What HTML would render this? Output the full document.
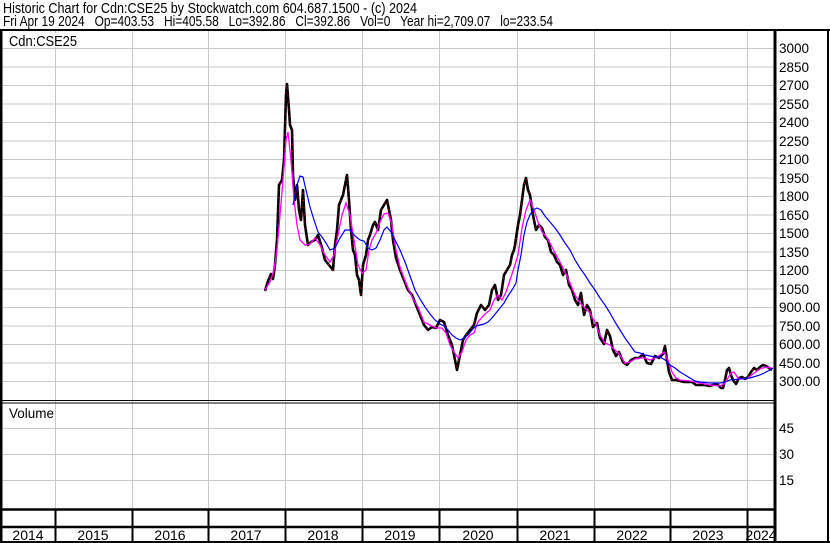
<!DOCTYPE html>
<html><head><meta charset="utf-8"><style>
html,body{margin:0;padding:0;background:#fff;width:830px;height:543px;overflow:hidden}
svg{display:block}
text{font-family:"Liberation Sans",Arial,sans-serif;fill:#000}
</style></head><body>
<svg width="830" height="543" viewBox="0 0 830 543" xmlns="http://www.w3.org/2000/svg">
<rect width="830" height="543" fill="#fff"/>
<text x="3" y="13" font-size="15" textLength="414" lengthAdjust="spacingAndGlyphs">Historic Chart for Cdn:CSE25 by Stockwatch.com 604.687.1500 - (c) 2024</text>
<text x="3" y="26" font-size="15" textLength="550" lengthAdjust="spacingAndGlyphs">Fri Apr 19 2024&#160;&#160; Op=403.53&#160;&#160; Hi=405.58&#160;&#160; Lo=392.86&#160;&#160; Cl=392.86&#160;&#160; Vol=0&#160;&#160; Year hi=2,709.07&#160;&#160; lo=233.54</text>
<g stroke="#c8c8c8" stroke-width="1">
<path d="M2 48.5H774M2 67H774M2 85.5H774M2 104H774M2 122.5H774M2 141H774M2 159.5H774M2 178H774M2 196.5H774M2 215H774M2 233.5H774M2 252H774M2 270.5H774M2 289H774M2 307.5H774M2 326H774M2 344.5H774M2 363H774M2 381.5H774"/>
<path d="M2 428.5H774M2 454.5H774M2 480.5H774"/>
<path d="M55.5 31V510M132.5 31V510M208.5 31V510M285.5 31V510M362.5 31V510M439.5 31V510M517.5 31V510M594.5 31V510M670.5 31V510M747.5 31V510"/>
</g>
<rect x="4" y="33" width="76" height="14" fill="#fff"/>
<text x="9" y="46" font-size="15" textLength="68" lengthAdjust="spacingAndGlyphs">Cdn:CSE25</text>
<rect x="4" y="404" width="50" height="18" fill="#fff"/>
<text x="9" y="418" font-size="14" textLength="45" lengthAdjust="spacingAndGlyphs">Volume</text>
<g stroke="#000" fill="none">
<path d="M0 30H830" stroke-width="2"/>
<path d="M1 30V543" stroke-width="3"/>
<path d="M775 30V543" stroke-width="3"/>
<path d="M828 30V543" stroke-width="2"/>
<path d="M0 400.5H775M0 403H775" stroke-width="1"/>
<path d="M0 509.5H775" stroke-width="2.5"/>
<path d="M0 527H775" stroke-width="2.5"/>
<path d="M0 542H830" stroke-width="2"/>
<path d="M55.5 510V542M132.5 510V542M208.5 510V542M285.5 510V542M362.5 510V542M439.5 510V542M517.5 510V542M594.5 510V542M670.5 510V542M747.5 510V542" stroke-width="2"/>
</g>
<g font-size="14" text-anchor="middle">
<text x="28" y="540">2014</text><text x="93" y="540">2015</text><text x="170" y="540">2016</text><text x="246" y="540">2017</text><text x="323" y="540">2018</text><text x="400" y="540">2019</text><text x="478" y="540">2020</text><text x="555" y="540">2021</text><text x="632" y="540">2022</text><text x="708" y="540">2023</text><text x="761" y="540">2024</text>
</g>
<g font-size="13.5">
<text x="779" y="53">3000</text><text x="779" y="72">2850</text><text x="779" y="90">2700</text><text x="779" y="109">2550</text><text x="779" y="127">2400</text><text x="779" y="146">2250</text><text x="779" y="164">2100</text><text x="779" y="183">1950</text><text x="779" y="201">1800</text><text x="779" y="220">1650</text><text x="779" y="238">1500</text><text x="779" y="257">1350</text><text x="779" y="275">1200</text><text x="779" y="294">1050</text><text x="779" y="312">900.00</text><text x="779" y="331">750.00</text><text x="779" y="349">600.00</text><text x="779" y="368">450.00</text><text x="779" y="386">300.00</text>
<text x="779" y="433">45</text><text x="779" y="459">30</text><text x="779" y="485">15</text>
</g>
<polyline fill="none" stroke="#000" stroke-width="2.6" stroke-linejoin="round" points="265,291 268,281 271,274 273,279 275,265 277,240 279,185 282,180 284,160 286,95 287,84 289,110 290,125 292,130 293,175 295,200 297,185 299,210 301,220 303,190 305,225 308,245 311,242 315,240 318,235 322,248 325,260 329,265 333,270 335,245 337,230 339,205 341,200 343,195 345,185 347,175 349,200 351,230 353,250 355,255 357,275 359,280 361,295 363,265 366,255 368,240 370,235 373,225 375,222 378,230 381,210 384,205 387,200 389,210 391,220 393,240 396,258 400,270 404,280 408,290 412,295 416,305 420,315 424,325 428,330 432,327 436,328 440,320 444,322 448,335 452,345 455,360 457,370 460,355 463,340 466,335 470,330 474,325 477,313 481,305 485,310 489,305 492,290 495,285 498,300 501,295 504,275 507,270 510,265 512,255 514,250 515,245 518,225 520,215 522,200 524,185 526,178 528,190 530,195 533,215 536,230 539,225 542,228 545,237 548,240 551,252 554,255 557,262 560,265 563,275 566,270 569,285 572,290 575,300 578,305 581,293 584,315 587,305 590,310 593,327 597,323 600,338 604,344 607,330 610,336 613,350 616,356 619,352 623,362 627,365 631,360 635,358 639,358 643,354 647,363 651,364 655,356 659,358 663,354 665,346 667,360 669,372 672,380 676,380 680,381 684,382 688,382 692,382 696,385 700,385 705,385 709,386 713,385 717,384 721,388 723,388 725,380 727,370 729,368 731,375 733,380 736,384 739,378 742,377 745,379 748,377 751,372 754,368 757,370 760,367 763,365 766,366 769,368 772,370"/>
<polyline fill="none" stroke="#e00" stroke-width="1" stroke-dasharray="1 6" points="265,291 268,281 271,274 273,279 275,265 277,240 279,185 282,180 284,160 286,95 287,84 289,110 290,125 292,130 293,175 295,200 297,185 299,210 301,220 303,190 305,225 308,245 311,242 315,240 318,235 322,248 325,260 329,265 333,270 335,245 337,230 339,205 341,200 343,195 345,185 347,175 349,200 351,230 353,250 355,255 357,275 359,280 361,295 363,265 366,255 368,240 370,235 373,225 375,222 378,230 381,210 384,205 387,200 389,210 391,220 393,240 396,258 400,270 404,280 408,290 412,295 416,305 420,315 424,325 428,330 432,327 436,328 440,320 444,322 448,335 452,345 455,360 457,370 460,355 463,340 466,335 470,330 474,325 477,313 481,305 485,310 489,305 492,290 495,285 498,300 501,295 504,275 507,270 510,265 512,255 514,250 515,245 518,225 520,215 522,200 524,185 526,178 528,190 530,195 533,215 536,230 539,225 542,228 545,237 548,240 551,252 554,255 557,262 560,265 563,275 566,270 569,285 572,290 575,300 578,305 581,293 584,315 587,305 590,310 593,327 597,323 600,338 604,344 607,330 610,336 613,350 616,356 619,352 623,362 627,365 631,360 635,358 639,358 643,354 647,363 651,364 655,356 659,358 663,354 665,346 667,360 669,372 672,380 676,380 680,381 684,382 688,382 692,382 696,385 700,385 705,385 709,386 713,385 717,384 721,388 723,388 725,380 727,370 729,368 731,375 733,380 736,384 739,378 742,377 745,379 748,377 751,372 754,368 757,370 760,367 763,365 766,366 769,368 772,370"/>
<polyline fill="none" stroke="#ff00ff" stroke-width="1.3" points="265,290 270,282 274,270 277,250 280,215 283,180 286,140 288,132 291,160 294,200 297,225 300,240 305,245 310,244 315,238 320,245 325,255 330,262 334,255 338,235 342,215 346,203 350,215 354,240 358,265 362,273 366,270 369,250 372,240 376,233 380,222 384,214 388,213 392,225 396,250 400,267 406,283 412,297 418,307 424,322 430,325 436,328 442,328 446,333 450,345 454,352 458,358 462,352 466,340 470,335 474,333 478,322 484,315 490,310 494,300 498,295 502,300 506,292 510,280 514,268 518,255 522,228 526,210 530,200 534,210 538,222 542,232 546,236 550,243 555,253 560,262 565,272 570,283 575,295 580,303 585,308 590,313 595,322 600,335 605,343 610,345 615,350 620,355 625,363 630,362 635,359 640,358 645,358 650,360 655,358 660,355 664,352 668,360 672,372 676,378 680,380 690,381 700,383 710,385 720,386 724,384 728,378 731,373 734,372 738,378 742,379 748,378 754,373 760,369 766,367 772,368"/>
<polyline fill="none" stroke="#0000ee" stroke-width="1.2" points="293,205 297,185 300,176 303,177 306,190 310,207 314,220 318,232 322,237 326,243 330,250 335,248 340,238 345,230 350,230 355,236 360,240 364,241 368,248 372,250 376,248 380,240 384,230 387,227 391,232 395,240 400,250 405,262 410,276 415,290 420,299 425,307 430,314 435,320 440,324 444,326 448,330 452,335 456,338 460,340 464,338 468,335 472,330 476,326 480,325 484,324 488,322 492,318 496,313 500,308 504,303 508,296 512,290 516,283 518,270 521,255 524,235 527,222 530,215 533,210 537,208 541,210 545,216 550,222 555,228 560,235 565,243 570,250 575,260 580,268 585,275 590,283 595,290 600,298 605,305 610,313 615,322 620,330 625,338 630,345 635,352 640,353 645,355 650,356 655,357 660,357 665,360 670,365 675,368 680,372 685,375 690,378 695,381 700,382 710,383 720,383 725,382 730,380 740,379 750,378 760,375 770,370 773,368"/>
</svg>
</body></html>
